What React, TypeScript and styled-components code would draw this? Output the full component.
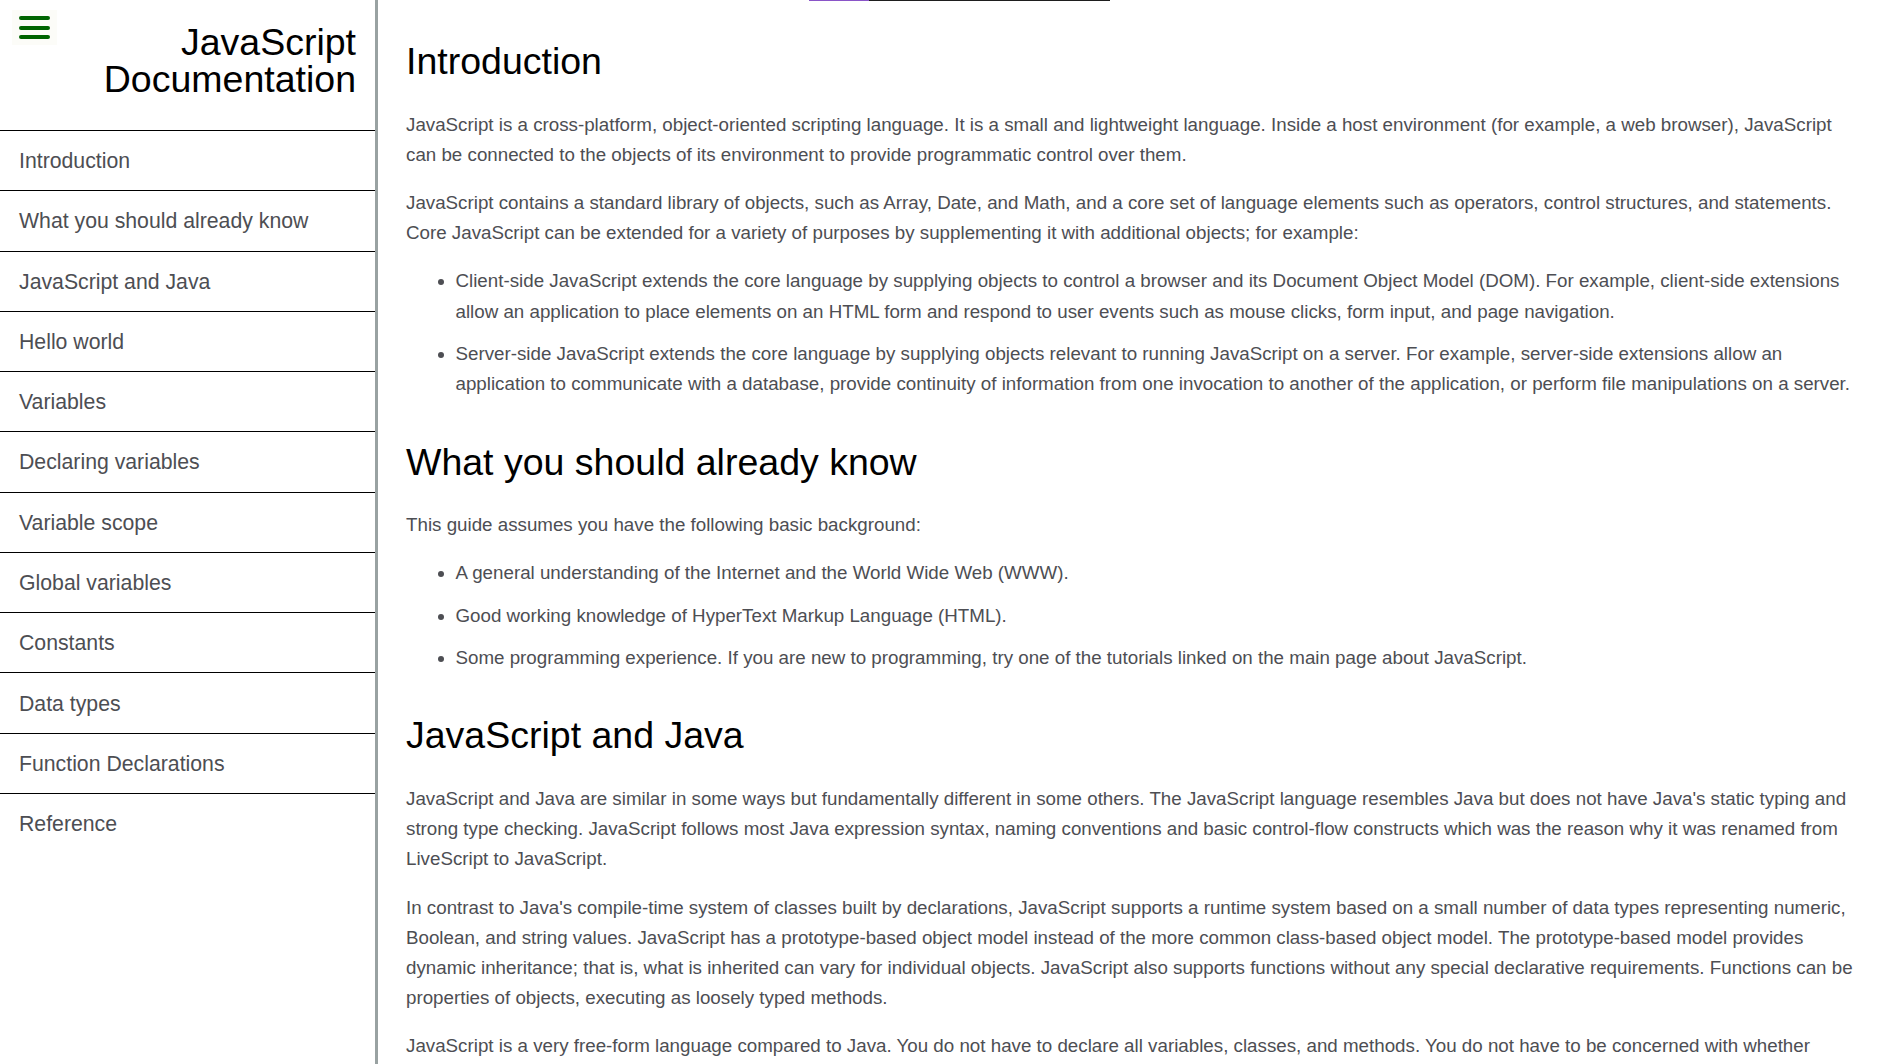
import React from "react";
import styled, { createGlobalStyle } from "styled-components";

const GlobalStyle = createGlobalStyle`
  html, body {
    margin: 0;
    padding: 0;
    background: #ffffff;
    overflow: hidden;
  }
  body {
    font-family: "Liberation Sans", Arial, sans-serif;
  }
  * { box-sizing: border-box; }
`;

const Page = styled.div`
  display: grid;
  grid-template-columns: 378px 1fr;
  height: 100vh;
  width: 100vw;
  overflow: hidden;
`;

const Sidebar = styled.nav`
  display: flex;
  flex-direction: column;
  height: 100%;
  border-right: 3px solid rgba(0, 22, 22, 0.4);
`;

const Header = styled.header`
  display: flex;
  justify-content: space-between;
  align-items: flex-start;
  height: 130px;
  padding: 10px 19px 0 12px;
`;

const MenuButton = styled.button`
  display: flex;
  flex-direction: column;
  gap: 5.5px;
  width: 45px;
  height: 35px;
  padding: 6px 7px;
  border: none;
  background: #fcfcf8;
  cursor: pointer;
`;

const MenuBar = styled.span`
  display: block;
  width: 31px;
  height: 5px;
  border-radius: 2.5px;
  background: #006400;
`;

const Title = styled.h1`
  flex: 1;
  margin: 14px 0 0;
  font-size: 37.5px;
  line-height: 37px;
  font-weight: 400;
  color: #000;
  text-align: right;
`;

const NavList = styled.ul`
  list-style: none;
  margin: 0;
  padding: 0;
`;

const NavItem = styled.li`
  height: 60.27px;
  border-top: 1px solid #000;
`;

const NavLink = styled.a`
  display: flex;
  align-items: center;
  height: 100%;
  padding: 2px 0 0 19px;
  font-size: 21.25px;
  color: #4d4e53;
  text-decoration: none;
`;

const Main = styled.main`
  height: 100%;
  overflow: hidden;
  padding: 0 30px 0 28px;
`;

const TopRule = styled.div`
  display: flex;
  width: 301px;
  height: 1px;
  margin-left: 403px;
`;

const RuleSegment = styled.span<{ $w: string; $c: string }>`
  display: block;
  height: 100%;
  width: ${(p) => p.$w};
  background: ${(p) => p.$c};
`;

const Content = styled.div`
  padding-top: 39px;
`;

const Section = styled.section`
  margin-bottom: 41.5px;
`;

const Heading = styled.h2`
  margin: 0 0 27px;
  font-size: 37.5px;
  line-height: 42.5px;
  font-weight: 400;
  color: #000;
`;

const Paragraph = styled.p`
  margin: 0 0 18px;
  font-size: 18.75px;
  line-height: 30.2px;
  color: #4d4e53;
`;

const List = styled.ul`
  margin: 0;
  padding: 0 0 0 49.5px;
  list-style: disc;
`;

const ListItem = styled.li`
  margin-top: 12px;
  font-size: 18.75px;
  line-height: 30.2px;
  color: #4d4e53;
`;

const navItems = [
  "Introduction",
  "What you should already know",
  "JavaScript and Java",
  "Hello world",
  "Variables",
  "Declaring variables",
  "Variable scope",
  "Global variables",
  "Constants",
  "Data types",
  "Function Declarations",
  "Reference",
];

type Sec = { title: string; blocks: Array<{ p?: string; ul?: string[] }> };

const sections: Sec[] = [
  {
    title: "Introduction",
    blocks: [
      {
        p: "JavaScript is a cross-platform, object-oriented scripting language. It is a small and lightweight language. Inside a host environment (for example, a web browser), JavaScript can be connected to the objects of its environment to provide programmatic control over them.",
      },
      {
        p: "JavaScript contains a standard library of objects, such as Array, Date, and Math, and a core set of language elements such as operators, control structures, and statements. Core JavaScript can be extended for a variety of purposes by supplementing it with additional objects; for example:",
      },
      {
        ul: [
          "Client-side JavaScript extends the core language by supplying objects to control a browser and its Document Object Model (DOM). For example, client-side extensions allow an application to place elements on an HTML form and respond to user events such as mouse clicks, form input, and page navigation.",
          "Server-side JavaScript extends the core language by supplying objects relevant to running JavaScript on a server. For example, server-side extensions allow an application to communicate with a database, provide continuity of information from one invocation to another of the application, or perform file manipulations on a server.",
        ],
      },
    ],
  },
  {
    title: "What you should already know",
    blocks: [
      { p: "This guide assumes you have the following basic background:" },
      {
        ul: [
          "A general understanding of the Internet and the World Wide Web (WWW).",
          "Good working knowledge of HyperText Markup Language (HTML).",
          "Some programming experience. If you are new to programming, try one of the tutorials linked on the main page about JavaScript.",
        ],
      },
    ],
  },
  {
    title: "JavaScript and Java",
    blocks: [
      {
        p: "JavaScript and Java are similar in some ways but fundamentally different in some others. The JavaScript language resembles Java but does not have Java's static typing and strong type checking. JavaScript follows most Java expression syntax, naming conventions and basic control-flow constructs which was the reason why it was renamed from LiveScript to JavaScript.",
      },
      {
        p: "In contrast to Java's compile-time system of classes built by declarations, JavaScript supports a runtime system based on a small number of data types representing numeric, Boolean, and string values. JavaScript has a prototype-based object model instead of the more common class-based object model. The prototype-based model provides dynamic inheritance; that is, what is inherited can vary for individual objects. JavaScript also supports functions without any special declarative requirements. Functions can be properties of objects, executing as loosely typed methods.",
      },
      {
        p: "JavaScript is a very free-form language compared to Java. You do not have to declare all variables, classes, and methods. You do not have to be concerned with whether methods are public, private, or protected, or if interfaces are implemented. Variables, parameters, and function return types are not explicitly typed.",
      },
    ],
  },
];

export default function App() {
  return (
    <>
      <GlobalStyle />
      <Page>
        <Sidebar id="navbar">
          <Header>
            <MenuButton aria-label="Menu">
              <MenuBar />
              <MenuBar />
              <MenuBar />
            </MenuButton>
            <Title>JavaScript Documentation</Title>
          </Header>
          <NavList>
            {navItems.map((item) => (
              <NavItem key={item}>
                <NavLink href={`#${item.replace(/ /g, "_")}`}>{item}</NavLink>
              </NavItem>
            ))}
          </NavList>
        </Sidebar>
        <Main id="main-doc">
          <TopRule>
            <RuleSegment $w="60px" $c="#8a55c8" />
            <RuleSegment $w="241px" $c="#1e1e1e" />
          </TopRule>
          <Content>
            {sections.map((s) => (
              <Section key={s.title} id={s.title.replace(/ /g, "_")}>
                <Heading>{s.title}</Heading>
                {s.blocks.map((b, i) =>
                  b.p ? (
                    <Paragraph key={i}>{b.p}</Paragraph>
                  ) : (
                    <List key={i}>
                      {b.ul!.map((li) => (
                        <ListItem key={li}>{li}</ListItem>
                      ))}
                    </List>
                  )
                )}
              </Section>
            ))}
          </Content>
        </Main>
      </Page>
    </>
  );
}
